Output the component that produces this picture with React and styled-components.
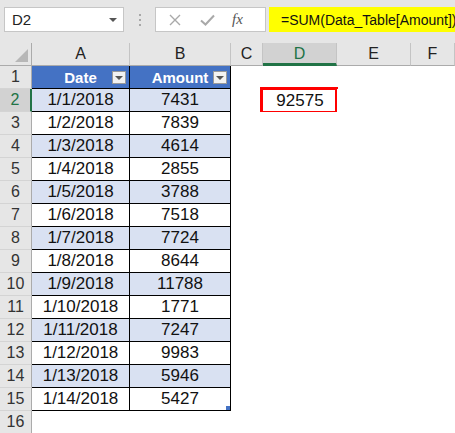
import styled, { createGlobalStyle } from 'styled-components';

const GlobalStyle = createGlobalStyle`
  html, body {
    margin: 0;
    padding: 0;
    background: #ffffff;
    font-family: 'Liberation Sans', Arial, sans-serif;
  }
`;

const Window = styled.div`
  width: 455px;
  height: 433px;
  overflow: hidden;
  background: #ffffff;
`;

const Toolbar = styled.div`
  height: 43px;
  background: #e6e6e6;
  display: flex;
  align-items: flex-start;
  padding-top: 7px;
  box-sizing: border-box;
`;

const NameBox = styled.div`
  margin-left: 4px;
  width: 120px;
  height: 25px;
  box-sizing: border-box;
  background: #ffffff;
  border: 1px solid #c6c6c6;
  display: flex;
  align-items: center;
  justify-content: space-between;
  padding: 0 6px 0 7px;
  font-size: 15px;
  color: #222;
`;

const Caret = styled.span`
  width: 0;
  height: 0;
  border-left: 4px solid transparent;
  border-right: 4px solid transparent;
  border-top: 4px solid #555;
`;

const Dots = styled.div`
  width: 31px;
  height: 25px;
  display: flex;
  flex-direction: column;
  align-items: center;
  justify-content: center;
  gap: 3px;
  span {
    width: 2px;
    height: 2px;
    background: #a8a8a8;
  }
`;

const FormulaButtons = styled.div`
  width: 111px;
  height: 25px;
  box-sizing: border-box;
  background: #ffffff;
  border: 1px solid #c6c6c6;
  display: flex;
  align-items: center;
  padding-left: 13px;
  gap: 19px;
`;

const Fx = styled.span`
  font-family: 'Liberation Serif', 'Times New Roman', serif;
  font-style: italic;
  font-size: 15px;
  color: #555;
  margin-left: -2px;
`;

const FormulaInput = styled.div`
  margin-left: 3px;
  flex: 1;
  height: 25px;
  background: #ffff00;
  display: flex;
  align-items: center;
  padding-left: 12px;
  font-size: 14px;
  color: #111;
  white-space: nowrap;
  overflow: hidden;
`;

const Sheet = styled.div`
  display: grid;
  grid-template-columns: 32px 98px 101px 32px 74px 74px 44px;
  grid-auto-rows: 23px;
  font-size: 16px;
  color: #111;
`;

const Corner = styled.div`
  background: #e6e6e6;
  border-right: 1px solid #ababab;
  border-bottom: 1px solid #ababab;
  box-sizing: border-box;
  position: relative;
  &::after {
    content: '';
    position: absolute;
    right: 3px;
    bottom: 3px;
    border-left: 13px solid transparent;
    border-bottom: 13px solid #b7b7b7;
  }
`;

const ColHead = styled.div`
  box-sizing: border-box;
  background: ${(p) => (p.$active ? '#d2d2d2' : '#e6e6e6')};
  color: ${(p) => (p.$active ? '#217346' : '#222')};
  border-right: 1px solid #c4c4c4;
  border-bottom: ${(p) => (p.$active ? '3px solid #217346' : '1px solid #ababab')};
  display: flex;
  align-items: center;
  justify-content: center;
  padding-top: ${(p) => (p.$active ? '2px' : '0')};
`;

const RowHead = styled.div`
  box-sizing: border-box;
  background: ${(p) => (p.$active ? '#d2d2d2' : '#e6e6e6')};
  color: ${(p) => (p.$active ? '#217346' : '#333')};
  border-right: ${(p) => (p.$active ? '2px solid #217346' : '1px solid #ababab')};
  border-bottom: 1px solid #d4d4d4;
  display: flex;
  align-items: center;
  justify-content: center;
`;

const Cell = styled.div`
  box-sizing: border-box;
  position: relative;
  display: flex;
  align-items: center;
  justify-content: center;
  background: ${(p) => (p.$head ? '#4472c4' : p.$band ? '#d9e1f2' : '#ffffff')};
  color: ${(p) => (p.$head ? '#ffffff' : '#111')};
  font-weight: ${(p) => (p.$head ? 700 : 400)};
  font-size: ${(p) => (p.$head ? '15px' : '17px')};
  border-right: ${(p) => (p.$table ? '1px solid #000' : 'none')};
  border-bottom: ${(p) => (p.$table ? '1px solid #000' : 'none')};
`;

const FilterButton = styled.span`
  position: absolute;
  right: 3px;
  top: 5px;
  width: 14px;
  height: 13px;
  box-sizing: border-box;
  background: #f2f2f2;
  border: 1px solid #9a9a9a;
  display: flex;
  align-items: center;
  justify-content: center;
  &::after {
    content: '';
    border-left: 4px solid transparent;
    border-right: 4px solid transparent;
    border-top: 4px solid #555;
  }
`;

const Highlight = styled.span`
  position: absolute;
  top: -2px;
  left: -3px;
  right: -1px;
  bottom: -2px;
  border: 3px solid #ff0000;
  pointer-events: none;
  &::after {
    content: '';
    position: absolute;
    right: -5px;
    bottom: -5px;
    width: 4px;
    height: 4px;
    background: #217346;
  }
`;

const ResizeHandle = styled.span`
  position: absolute;
  right: 0;
  bottom: 0;
  width: 4px;
  height: 4px;
  background: #4472c4;
`;

const columns = ['A', 'B', 'C', 'D', 'E', 'F'];

const rows = [
  ['1/1/2018', 7431],
  ['1/2/2018', 7839],
  ['1/3/2018', 4614],
  ['1/4/2018', 2855],
  ['1/5/2018', 3788],
  ['1/6/2018', 7518],
  ['1/7/2018', 7724],
  ['1/8/2018', 8644],
  ['1/9/2018', 11788],
  ['1/10/2018', 1771],
  ['1/11/2018', 7247],
  ['1/12/2018', 9983],
  ['1/13/2018', 5946],
  ['1/14/2018', 5427],
];

const EmptyCells = ({ count }) =>
  Array.from({ length: count }).map((_, i) => <Cell key={i} />);

export default function App() {
  return (
    <Window>
      <GlobalStyle />
      <Toolbar>
        <NameBox>
          D2
          <Caret />
        </NameBox>
        <Dots>
          <span />
          <span />
          <span />
        </Dots>
        <FormulaButtons>
          <svg width="12" height="12" viewBox="0 0 12 12">
            <path d="M1 1 L11 11 M11 1 L1 11" stroke="#a9a9a9" strokeWidth="1.4" fill="none" />
          </svg>
          <svg width="15" height="12" viewBox="0 0 15 12">
            <path d="M1 6.5 L5.5 10.5 L14 1.5" stroke="#a9a9a9" strokeWidth="2" fill="none" />
          </svg>
          <Fx>fx</Fx>
        </FormulaButtons>
        <FormulaInput>=SUM(Data_Table[Amount])</FormulaInput>
      </Toolbar>

      <Sheet>
        <Corner />
        {columns.map((c) => (
          <ColHead key={c} $active={c === 'D'}>
            {c}
          </ColHead>
        ))}

        <RowHead>1</RowHead>
        <Cell $head $table>
          Date
          <FilterButton />
        </Cell>
        <Cell $head $table>
          Amount
          <FilterButton />
        </Cell>
        <EmptyCells count={4} />

        {rows.map(([date, amount], i) => {
          const last = i === rows.length - 1;
          return [
            <RowHead key={`h${i}`} $active={i === 0}>
              {i + 2}
            </RowHead>,
            <Cell key={`a${i}`} $table $band={i % 2 === 0}>
              {date}
            </Cell>,
            <Cell key={`b${i}`} $table $band={i % 2 === 0}>
              {amount}
              {last && <ResizeHandle />}
            </Cell>,
            <Cell key={`c${i}`} />,
            <Cell key={`d${i}`}>
              {i === 0 && (
                <>
                  92575
                  <Highlight />
                </>
              )}
            </Cell>,
            <Cell key={`e${i}`} />,
            <Cell key={`f${i}`} />,
          ];
        })}

        <RowHead>16</RowHead>
        <EmptyCells count={6} />
      </Sheet>
    </Window>
  );
}
